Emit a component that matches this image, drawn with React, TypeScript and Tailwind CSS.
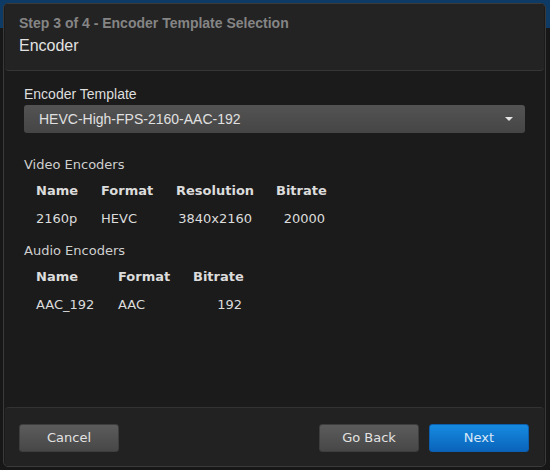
import React from 'react';

const sans = "font-['Liberation_Sans',Arial,sans-serif]";
const verdana = "font-['DejaVu_Sans',Verdana,sans-serif]";

const videoRows = [{ name: '2160p', format: 'HEVC', resolution: '3840x2160', bitrate: '20000' }];
const audioRows = [{ name: 'AAC_192', format: 'AAC', bitrate: '192' }];

function Button({ label, primary }: { label: string; primary?: boolean }) {
  return (
    <button
      className={`w-[100px] h-7 rounded-[3px] text-[13px] ${verdana} ${
        primary
          ? 'bg-[linear-gradient(to_bottom,#168ae0,#0a64bb)] text-[#d8e8f8] border border-[#0b5fae]'
          : 'bg-[linear-gradient(to_bottom,#5c5c5c,#474747)] text-[#e2e2e2] border border-[#3e3e3e]'
      }`}
    >
      {label}
    </button>
  );
}

export default function App() {
  return (
    <div className="w-[550px] h-[470px] bg-[linear-gradient(to_bottom,#0e3a66_0px,#0e3a66_28px,#171717_28px)] p-[3px] pr-[4px]">
      <div className="h-[464px] flex flex-col bg-[#1b1b1b] border border-[#3a3a3a] rounded-[5px] overflow-hidden">
        {/* Header */}
        <div className={`h-[67px] mx-px bg-[#232323] border-b border-[#363636] rounded-b-[4px] px-[14px] pt-[11px] ${sans}`}>
          <div className="text-[14px] font-bold leading-[17px] text-[#858585]">Step 3 of 4 - Encoder Template Selection</div>
          <div className="text-[16px] leading-[20px] mt-[4px] text-[#e2e2e2]">Encoder</div>
        </div>

        {/* Body */}
        <div className="flex-1 px-[20px] pt-[13px]">
          <div className={`text-[14px] leading-[20px] text-[#dedede] ${sans}`}>Encoder Template</div>
          <div className="mt-[1px] h-7 rounded-[3px] bg-[linear-gradient(to_bottom,#535353,#454545)] flex items-center justify-between pl-[15px] pr-[12px]">
            <span className={`text-[14px] text-[#e0e0e0] ${sans}`}>HEVC-High-FPS-2160-AAC-192</span>
            <svg width="8" height="4" viewBox="0 0 8 4">
              <path d="M0 0 L8 0 L4 4 Z" fill="#e6e6e6" />
            </svg>
          </div>

          <div className={`mt-[23px] text-[13px] leading-[18px] text-[#cfcfcf] ${verdana}`}>Video Encoders</div>
          <table className={`mt-[3px] table-fixed w-[313px] text-[13px] text-[#dcdcdc] ${verdana}`}>
            <thead>
              <tr className="h-7">
                <th className="w-[65px] px-3 text-left font-bold whitespace-nowrap">Name</th>
                <th className="w-[75px] px-3 text-left font-bold whitespace-nowrap">Format</th>
                <th className="w-[100px] px-3 text-left font-bold whitespace-nowrap">Resolution</th>
                <th className="w-[73px] px-3 text-left font-bold whitespace-nowrap">Bitrate</th>
              </tr>
            </thead>
            <tbody>
              {videoRows.map(r => (
                <tr key={r.name} className="h-7">
                  <td className="px-3 whitespace-nowrap">{r.name}</td>
                  <td className="px-3 whitespace-nowrap">{r.format}</td>
                  <td className="px-3 text-right whitespace-nowrap">{r.resolution}</td>
                  <td className="px-3 text-right whitespace-nowrap">{r.bitrate}</td>
                </tr>
              ))}
            </tbody>
          </table>

          <div className={`mt-[9px] text-[13px] leading-[18px] text-[#cfcfcf] ${verdana}`}>Audio Encoders</div>
          <table className={`mt-[3px] table-fixed w-[230px] text-[13px] text-[#dcdcdc] ${verdana}`}>
            <thead>
              <tr className="h-7">
                <th className="w-[82px] px-3 text-left font-bold whitespace-nowrap">Name</th>
                <th className="w-[75px] px-3 text-left font-bold whitespace-nowrap">Format</th>
                <th className="w-[73px] px-3 text-left font-bold whitespace-nowrap">Bitrate</th>
              </tr>
            </thead>
            <tbody>
              {audioRows.map(r => (
                <tr key={r.name} className="h-7">
                  <td className="px-3 whitespace-nowrap">{r.name}</td>
                  <td className="px-3 whitespace-nowrap">{r.format}</td>
                  <td className="px-3 text-right whitespace-nowrap">{r.bitrate}</td>
                </tr>
              ))}
            </tbody>
          </table>
        </div>

        {/* Footer */}
        <div className="h-[59px] mx-px bg-[#222222] border-t border-[#333333] rounded-t-[4px] flex items-start pt-[16px] pl-[14px] pr-[15px]">
          <Button label="Cancel" />
          <div className="flex-1" />
          <div className="flex gap-[10px]">
            <Button label="Go Back" />
            <Button label="Next" primary />
          </div>
        </div>
      </div>
    </div>
  );
}
